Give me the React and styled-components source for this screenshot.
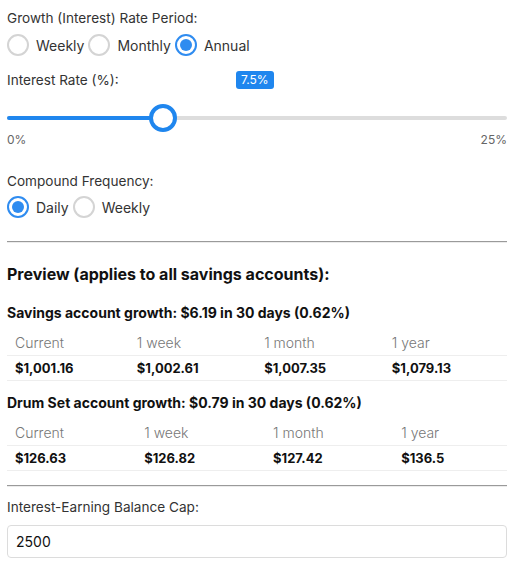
import React from "react";
import styled, { createGlobalStyle } from "styled-components";

const GlobalStyle = createGlobalStyle`
  body {
    margin: 0;
    font-family: Inter, "Liberation Sans", sans-serif;
    color: #222;
    background: #fff;
  }
`;

const Page = styled.div`
  padding: 8px 10px 0 7px;
`;

const Label = styled.div`
  font-size: 13.6px;
  line-height: 20px;
  color: #333;
  margin-top: ${(p) => p.$top || 0}px;
`;

const RadioRow = styled.div`
  display: flex;
  align-items: center;
  gap: 4px;
  margin-top: ${(p) => p.$top || 0}px;
`;

const RadioItem = styled.label`
  display: flex;
  align-items: center;
  gap: 7px;
  font-size: 14px;
  color: #333;
`;

const RadioCircle = styled.span`
  width: 22px;
  height: 22px;
  box-sizing: border-box;
  border-radius: 50%;
  border: 2px solid ${(p) => (p.$on ? "#2f8cf0" : "#d4d4d4")};
  display: flex;
  align-items: center;
  justify-content: center;
  &::after {
    content: "";
    width: 12px;
    height: 12px;
    border-radius: 50%;
    background: #2f8cf0;
    display: ${(p) => (p.$on ? "block" : "none")};
  }
`;

const SliderHead = styled.div`
  position: relative;
  margin-top: 14px;
`;

const Bubble = styled.span`
  position: absolute;
  left: 229px;
  top: 1px;
  background: #1f86ee;
  color: #fff;
  font-size: 12px;
  line-height: 18px;
  padding: 0 5px;
  border-radius: 3px;
`;

const Slider = styled.div`
  position: relative;
  height: 28px;
  margin-top: 14px;
`;

const Track = styled.div`
  position: absolute;
  left: 0;
  right: 0;
  top: 12px;
  height: 4px;
  border-radius: 2px;
  background: #dddddd;
`;

const Fill = styled.div`
  position: absolute;
  left: 0;
  top: 12px;
  height: 4px;
  border-radius: 2px;
  background: #1f86ee;
`;

const Thumb = styled.div`
  position: absolute;
  top: 0;
  width: 28px;
  height: 28px;
  box-sizing: border-box;
  border-radius: 50%;
  border: 4px solid #1f86ee;
  background: #fff;
`;

const Scale = styled.div`
  display: flex;
  justify-content: space-between;
  font-size: 12px;
  line-height: 16px;
  color: #666;
  margin-top: 0;
`;

const Rule = styled.hr`
  margin: ${(p) => p.$top}px 0 0;
  border: none;
  border-top: 1px solid #9a9a9a;
  border-bottom: 1px solid #ececec;
`;

const PreviewTitle = styled.h3`
  font-size: 16px;
  line-height: 22px;
  font-weight: 700;
  margin: 20px 0 0;
  color: #111;
`;

const AccountTitle = styled.h4`
  font-size: 14px;
  line-height: 20px;
  font-weight: 700;
  margin: ${(p) => p.$top}px 0 0;
  color: #111;
`;

const Table = styled.table`
  width: 100%;
  border-collapse: collapse;
  margin-top: 8px;
  font-size: 14px;
`;

const Th = styled.th`
  text-align: left;
  font-weight: 300;
  color: #777;
  padding: 2px 8px;
  line-height: 20px;
  border-bottom: 1px solid #eeeeee;
`;

const Td = styled.td`
  font-weight: 700;
  font-size: 13px;
  color: #111;
  padding: 2px 8px;
  line-height: 20px;
  border-bottom: 1px solid #eeeeee;
`;

const Input = styled.input`
  display: block;
  width: 100%;
  box-sizing: border-box;
  height: 33px;
  margin-top: 8px;
  padding: 0 8px;
  font-family: inherit;
  font-size: 14px;
  color: #111;
  border: 1px solid #dcdcdc;
  border-radius: 4px;
  outline: none;
`;

const Radio = ({ on, children }) => (
  <RadioItem>
    <RadioCircle $on={on} />
    {children}
  </RadioItem>
);

const accounts = [
  {
    name: "Savings",
    growth: "$6.19",
    values: ["$1,001.16", "$1,002.61", "$1,007.35", "$1,079.13"],
  },
  {
    name: "Drum Set",
    growth: "$0.79",
    values: ["$126.63", "$126.82", "$127.42", "$136.5"],
  },
];

const rate = 7.5;
const max = 25;

const App = () => {
  const pct = rate / max;
  return (
    <Page>
      <GlobalStyle />
      <Label>Growth (Interest) Rate Period:</Label>
      <RadioRow $top={6}>
        <Radio>Weekly</Radio>
        <Radio>Monthly</Radio>
        <Radio on>Annual</Radio>
      </RadioRow>

      <SliderHead>
        <Label>Interest Rate (%):</Label>
        <Bubble>7.5%</Bubble>
      </SliderHead>
      <Slider>
        <Track />
        <Fill style={{ width: `calc(14px + ${pct} * (100% - 28px))` }} />
        <Thumb style={{ left: `calc(${pct} * (100% - 28px))` }} />
      </Slider>
      <Scale>
        <span>0%</span>
        <span>25%</span>
      </Scale>

      <Label $top={23}>Compound Frequency:</Label>
      <RadioRow $top={5}>
        <Radio on>Daily</Radio>
        <Radio>Weekly</Radio>
      </RadioRow>

      <Rule $top={23} />

      <PreviewTitle>Preview (applies to all savings accounts):</PreviewTitle>

      {accounts.map((a, i) => (
        <div key={a.name}>
          <AccountTitle $top={i === 0 ? 18 : 12}>
            {a.name} account growth: {a.growth} in 30 days (0.62%)
          </AccountTitle>
          <Table>
            <thead>
              <tr>
                <Th>Current</Th>
                <Th>1 week</Th>
                <Th>1 month</Th>
                <Th>1 year</Th>
              </tr>
            </thead>
            <tbody>
              <tr>
                {a.values.map((v) => (
                  <Td key={v}>{v}</Td>
                ))}
              </tr>
            </tbody>
          </Table>
        </div>
      ))}

      <Rule $top={14} />

      <Label $top={10}>Interest-Earning Balance Cap:</Label>
      <Input defaultValue="2500" />
    </Page>
  );
};

export default App;
